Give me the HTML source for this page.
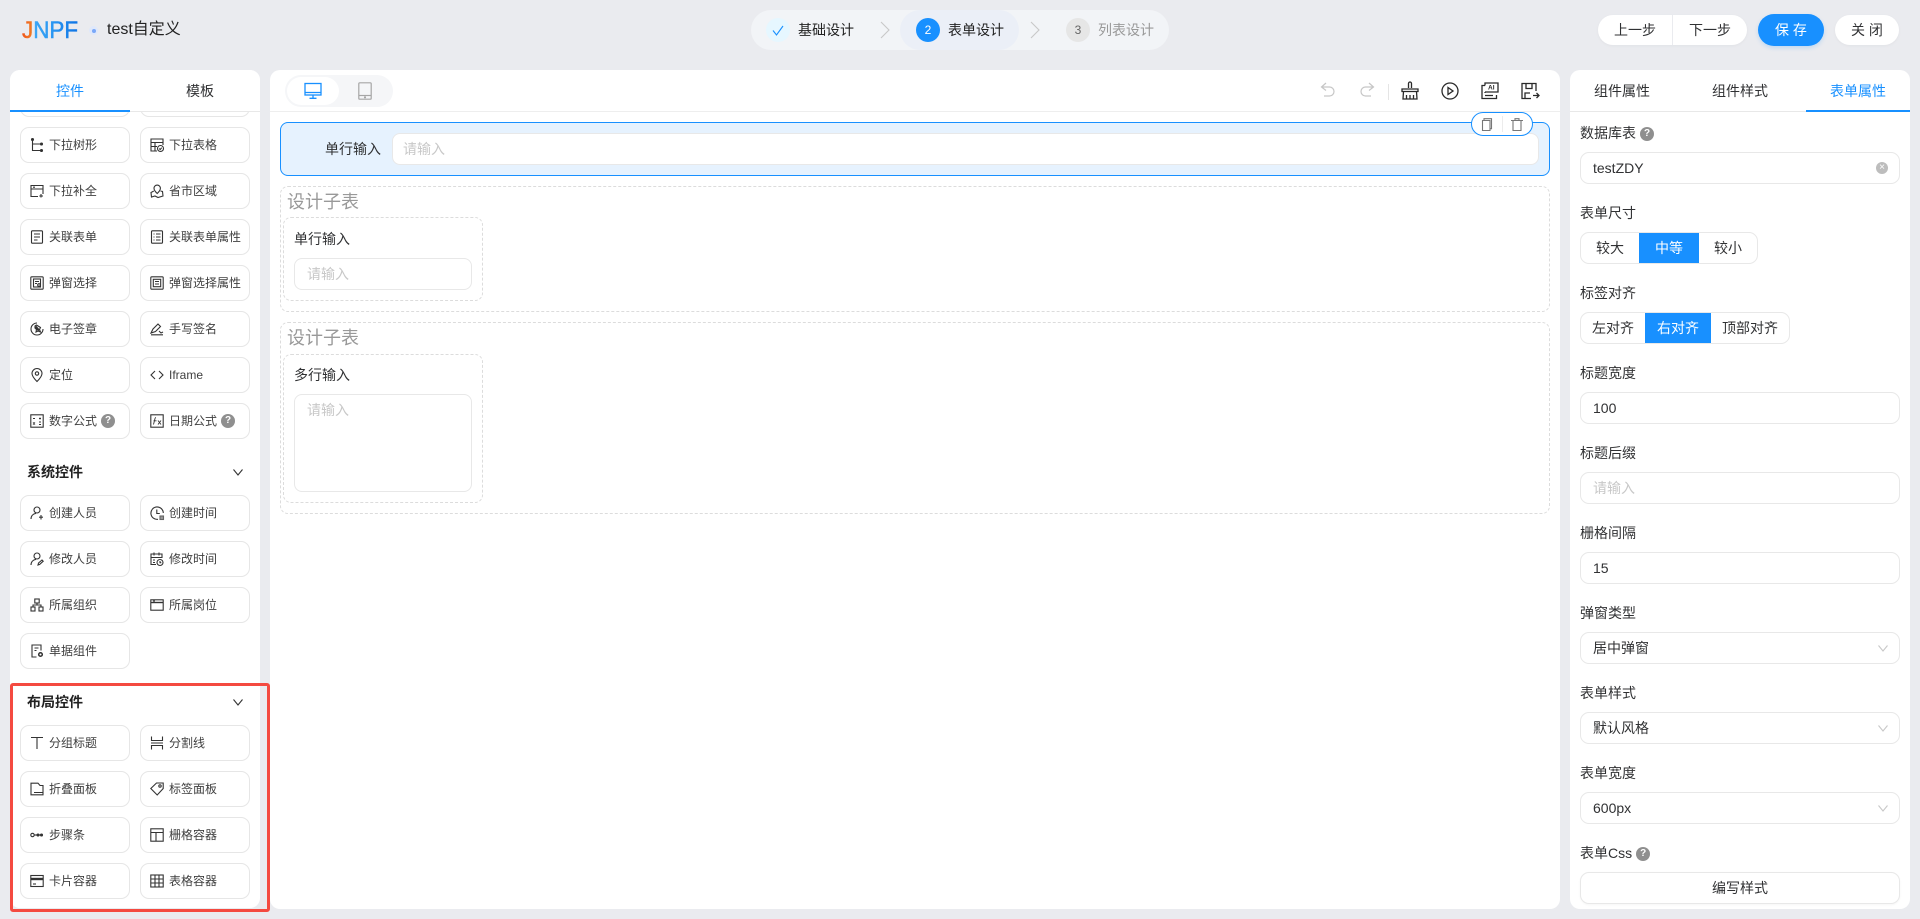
<!DOCTYPE html>
<html lang="zh-CN"><head><meta charset="utf-8"><title>test自定义</title>
<style>
*{box-sizing:border-box}
html,body{margin:0;padding:0}
body{width:1920px;height:919px;overflow:hidden;position:relative;background:#eaebef;font:14px/20px "Liberation Sans","Noto Sans CJK SC",sans-serif;color:#303133}
.a{position:absolute}
.t{position:absolute;white-space:nowrap;line-height:20px}
.panel{position:absolute;background:#fff;border-radius:10px}
svg{display:block;fill:none;stroke:#333;stroke-width:1.1;overflow:visible}
.it{position:absolute;width:110px;height:36px;border:1px solid #e6e6e6;border-radius:9px;background:#fff;display:flex;align-items:center;padding-left:9px;font-size:12px;color:#3f3f3f;white-space:nowrap}
.it svg{width:14px;height:14px;margin-right:5px;flex:none}
.q{display:inline-block;width:14px;height:14px;border-radius:50%;background:#8f8f8f;color:#fff;font-size:10px;line-height:14px;text-align:center;font-weight:bold;margin-left:4px;flex:none;vertical-align:-1px}
.lb .q{position:relative;top:-3px}
.h{position:absolute;left:27px;font-size:14px;font-weight:bold;color:#222;line-height:20px}
.inp{position:absolute;left:1580px;width:320px;height:32px;border:1px solid #e8e8e8;border-radius:9px;background:#fff;padding-left:12px;line-height:30px;color:#303133}
.ph{color:#c8c8c8}
.lb{position:absolute;left:1580px;line-height:20px;color:#303133;white-space:nowrap}
.rb{position:absolute;top:0;height:100%;text-align:center;line-height:30px}
.on{background:#1890ff;color:#fff;line-height:32px;top:-1px;height:32px}
.dash{position:absolute;border:1px dashed #dcdcdc;border-radius:8px}
.tb{position:absolute;top:81px;width:20px;height:20px}
</style></head><body>

<!-- header -->
<svg class="a" style="left:21px;top:15px;width:60px;height:30px;stroke:none" viewBox="0 0 60 30"><defs><linearGradient id="lg" gradientUnits="userSpaceOnUse" x1="0" y1="0" x2="58" y2="0"><stop offset="0" stop-color="#f0501a"/><stop offset=".18" stop-color="#f07a24"/><stop offset=".22" stop-color="#3aa6f5"/><stop offset=".55" stop-color="#2a96f2"/><stop offset="1" stop-color="#0c72e4"/></linearGradient></defs><text x="1" y="23" font-size="24" font-family="Liberation Sans" textLength="56" lengthAdjust="spacingAndGlyphs" fill="url(#lg)" stroke="url(#lg)" stroke-width=".5">JNPF</text></svg>
<div class="a" style="left:89px;top:26px;width:9px;height:9px;border-radius:50%;background:#dfe8fb"></div>
<div class="a" style="left:91.5px;top:28.5px;width:4px;height:4px;border-radius:50%;background:#7aa8f8"></div>
<div class="t" style="left:107px;top:20px;font-size:16px;color:#222">test自定义</div>

<div class="a" style="left:751px;top:10px;width:418px;height:40px;border-radius:20px;background:#f2f4f7"></div>
<div class="a" style="left:900px;top:10px;width:119px;height:40px;border-radius:20px;background:#ebeff7"></div>
<div class="a" style="left:766px;top:18px;width:24px;height:24px;border-radius:50%;background:#e6f7ff"></div>
<svg class="a" style="left:772px;top:25px;width:12px;height:11px;stroke:#1890ff" viewBox="0 0 12 11"><path d="M1 5.500 4.500 10 11 1"/></svg>
<div class="t" style="left:798px;top:20px;color:#222">基础设计</div>
<svg class="a" style="left:880px;top:22px;width:10px;height:16px;stroke:#c8c8c8" viewBox="0 0 10 16"><path d="M1 0 9 8 1 16"/></svg>
<div class="a" style="left:916px;top:18px;width:24px;height:24px;border-radius:50%;background:#1890ff;color:#fff;font-size:12px;line-height:25px;text-align:center">2</div>
<div class="t" style="left:948px;top:20px;color:#222">表单设计</div>
<svg class="a" style="left:1030px;top:22px;width:10px;height:16px;stroke:#c8c8c8" viewBox="0 0 10 16"><path d="M1 0 9 8 1 16"/></svg>
<div class="a" style="left:1066px;top:18px;width:24px;height:24px;border-radius:50%;background:#e6e6e6;color:#666;font-size:12px;line-height:25px;text-align:center">3</div>
<div class="t" style="left:1098px;top:20px;color:#999">列表设计</div>

<div class="a" style="left:1598px;top:15px;width:149px;height:30px;border-radius:15px;background:#fff;box-shadow:0 1px 3px rgba(0,0,0,.04)"></div>
<div class="a" style="left:1672px;top:15px;width:1px;height:30px;background:#eaebef"></div>
<div class="t" style="left:1614px;top:20px">上一步</div>
<div class="t" style="left:1689px;top:20px">下一步</div>
<div class="a" style="left:1758px;top:14px;width:66px;height:32px;border-radius:16px;background:#1890ff;color:#fff;text-align:center;line-height:32px;box-shadow:0 2px 4px rgba(24,144,255,.2)">保 存</div>
<div class="a" style="left:1835px;top:15px;width:64px;height:30px;border-radius:15px;background:#fff;text-align:center;line-height:30px;box-shadow:0 1px 3px rgba(0,0,0,.04)">关 闭</div>

<!-- left panel -->
<div class="panel" style="left:10px;top:70px;width:250px;height:838px"></div>
<div class="it" style="left:20px;top:81px"></div>
<div class="it" style="left:140px;top:81px"></div>
<div class="a" style="left:10px;top:70px;width:250px;height:42px;background:#fff;border-radius:10px 10px 0 0;border-bottom:1px solid #e8e8e8"></div>
<div class="a" style="left:10px;top:110px;width:120px;height:2px;background:#1890ff"></div>
<div class="t" style="left:56px;top:81px;color:#1890ff">控件</div>
<div class="t" style="left:186px;top:81px;color:#303133">模板</div>

<div class="it" style="left:20px;top:127px"><svg viewBox="0 0 14 14"><path d="M2.500 1v11.500H11M2.500 6H11"/><circle cx="2.500" cy="1.500" r="1" fill="#333"/><circle cx="11.500" cy="6" r="1" fill="#333"/><circle cx="11.500" cy="12.500" r="1" fill="#333"/></svg>下拉树形</div>
<div class="it" style="left:140px;top:127px"><svg viewBox="0 0 14 14"><path d="M7 13H1V1h12v6M1 4.500h12M1 8.500h6M5 4.500V13"/><circle cx="10.500" cy="10.500" r="3"/><path d="m9.200 10.500 1 1 1.500-1.800"/></svg>下拉表格</div>
<div class="it" style="left:20px;top:173px"><svg viewBox="0 0 14 14"><path d="M1 8V1.500h12V8M1 5h12M1 8v4.500h7M13 8v2M3 3.200h2M11 10v3.500M9.300 12H13"/></svg>下拉补全</div>
<div class="it" style="left:140px;top:173px"><svg viewBox="0 0 14 14"><path d="M3.800 7 1 8.500 1.500 13l3.500-1 3 1.500 5-1.500-.5-4.500L10.500 7"/><path d="M7.200 9.500C5 7.500 4 6 4 4.300a3.200 3.200 0 0 1 6.400 0c0 1.700-1 3.200-3.200 5.200Z"/></svg>省市区域</div>
<div class="it" style="left:20px;top:219px"><svg viewBox="0 0 14 14"><rect x="1.500" y=".8" width="11" height="12.400" rx="1"/><path d="M4 4h6M4 7h6M4 10h3.500"/></svg>关联表单</div>
<div class="it" style="left:140px;top:219px"><svg viewBox="0 0 14 14"><rect x="1.500" y=".8" width="11" height="12.400" rx="1"/><path d="M6 4h4.500M6 7h4.500M6 10h4.500M3.500 4h1M3.500 7h1M3.500 10h1"/></svg>关联表单属性</div>
<div class="it" style="left:20px;top:265px"><svg viewBox="0 0 14 14"><rect x=".8" y=".8" width="12.400" height="12.400" rx="1"/><rect x="3.500" y="3" width="7" height="8"/><path d="M5 5.500h4M5 7.500h2"/><circle cx="9" cy="9" r="1.300"/></svg>弹窗选择</div>
<div class="it" style="left:140px;top:265px"><svg viewBox="0 0 14 14"><rect x=".8" y=".8" width="12.400" height="12.400" rx="1"/><rect x="3.300" y="3.300" width="7.400" height="7.400"/><path d="M5 5.500h4M5 8h4"/></svg>弹窗选择属性</div>
<div class="it" style="left:20px;top:311px"><svg viewBox="0 0 14 14"><path d="M13 7A6 6 0 1 1 7 1M5 4 6.500 3l4 2.500-1 2 1 2.500-2.500-1-2 1 .5-2.500L5 6Z"/><path d="M5.500 4.500 9 8.500" stroke-width="2.200"/></svg>电子签章</div>
<div class="it" style="left:140px;top:311px"><svg viewBox="0 0 14 14"><path d="M1 11 3 7l5-5 2.500 2.500-5 5ZM1 12.800h12M9 9l2 2 2-1"/></svg>手写签名</div>
<div class="it" style="left:20px;top:357px"><svg viewBox="0 0 14 14"><path d="M7 13.500C3.500 10 2 7.800 2 5.500a5 5 0 0 1 10 0c0 2.300-1.500 4.500-5 8Z"/><circle cx="7" cy="5.500" r="1.700"/></svg>定位</div>
<div class="it" style="left:140px;top:357px"><svg viewBox="0 0 14 14"><path d="M5 3 1 7l4 4M9 3l4 4-4 4"/></svg>Iframe</div>
<div class="it" style="left:20px;top:403px"><svg viewBox="0 0 14 14"><rect x=".8" y=".8" width="12.400" height="12.400"/><path d="M3 4.500h2M9 4.500h2M10 3.500v2M3 9h2M9 8h2M9 10.500h2M3 10.500l2-2M3 8.500l2 2" stroke-width=".9"/></svg>数字公式<span class="q">?</span></div>
<div class="it" style="left:140px;top:403px"><svg viewBox="0 0 14 14"><rect x=".8" y=".8" width="12.400" height="12.400"/><path d="M3.500 10.500 5 4.500q.2-.9 1-.9M3.500 6.800h3M8 6.500l3 4M11 6.500l-3 4" stroke-width=".9"/></svg>日期公式<span class="q">?</span></div>

<div class="h" style="top:462px">系统控件</div>
<svg class="a" style="left:233px;top:469px;width:10px;height:7px" viewBox="0 0 10 7"><path d="M.5.500 5 6 9.500.500"/></svg>

<div class="it" style="left:20px;top:495px"><svg viewBox="0 0 14 14"><circle cx="7" cy="4" r="3"/><path d="M1 13c0-3 2-5.200 5-5.700M11 9v4.500M9 11.200h4"/></svg>创建人员</div>
<div class="it" style="left:140px;top:495px"><svg viewBox="0 0 14 14"><path d="M8 13.300A6.200 6.200 0 1 1 13.300 7"/><path d="M6.800 3.500v4h3"/><rect x="10" y="10" width="3.500" height="3.500" fill="#999" stroke="#666"/></svg>创建时间</div>
<div class="it" style="left:20px;top:541px"><svg viewBox="0 0 14 14"><circle cx="7" cy="4" r="3"/><path d="M1 13c0-3 2-5.200 5-5.700M8 13l.5-2 3.500-3 1.200 1.200-3.500 3.200Z"/></svg>修改人员</div>
<div class="it" style="left:140px;top:541px"><svg viewBox="0 0 14 14"><path d="M6 12.500H1V2h11v4M1 5.500h11M4 .5v3M9 .5v3M3 8h2M3 10.500h2"/><circle cx="10" cy="10.500" r="3"/><path d="M10 9v1.700h1.300"/></svg>修改时间</div>
<div class="it" style="left:20px;top:587px"><svg viewBox="0 0 14 14"><rect x="4.800" y="1" width="4.400" height="4"/><rect x="1" y="9" width="4" height="4"/><rect x="9" y="9" width="4" height="4"/><path d="M7 5v2M3 9V7h8v2"/></svg>所属组织</div>
<div class="it" style="left:140px;top:587px"><svg viewBox="0 0 14 14"><rect x=".8" y="1.800" width="12.400" height="10.400"/><path d="M.8 4.500h12.400" stroke-width="1.400"/><path d="M3 3h2"/></svg>所属岗位</div>
<div class="it" style="left:20px;top:633px"><svg viewBox="0 0 14 14"><path d="M6.500 13H2V1h9v5.500M4.500 4h4M4.500 6.500h2"/><circle cx="10.500" cy="10.500" r="1.800" stroke-width="1.500"/></svg>单据组件</div>

<div class="h" style="top:692px">布局控件</div>
<svg class="a" style="left:233px;top:699px;width:10px;height:7px" viewBox="0 0 10 7"><path d="M.5.500 5 6 9.500.500"/></svg>

<div class="it" style="left:20px;top:725px"><svg viewBox="0 0 14 14"><path d="M1 1.500h12M7 1.500V13"/></svg>分组标题</div>
<div class="it" style="left:140px;top:725px"><svg viewBox="0 0 14 14"><path d="M1.500 .5v4h11v-4M1 7h12M1.500 13.500v-4h11v4"/></svg>分割线</div>
<div class="it" style="left:20px;top:771px"><svg viewBox="0 0 14 14"><path d="M1 12.800V1.200h7L10 3.500h3v9.300ZM4 10.500h9"/></svg>折叠面板</div>
<div class="it" style="left:140px;top:771px"><svg viewBox="0 0 14 14"><path d="M.8 6.500 6.500 1h6.700v5.500l-6 6.500Z"/><circle cx="10" cy="4" r="1.200"/></svg>标签面板</div>
<div class="it" style="left:20px;top:817px"><svg viewBox="0 0 14 14"><circle cx="2.500" cy="7" r="1.700"/><path d="M4.200 7H13"/><circle cx="8" cy="7" r="1" fill="#333"/><circle cx="11.500" cy="7" r="1" fill="#333"/></svg>步骤条</div>
<div class="it" style="left:140px;top:817px"><svg viewBox="0 0 14 14"><rect x=".8" y=".8" width="12.400" height="12.400"/><path d="M.8 4.500h12.400M6 4.500v8.700"/></svg>栅格容器</div>
<div class="it" style="left:20px;top:863px"><svg viewBox="0 0 14 14"><rect x=".8" y="1.500" width="12.400" height="11"/><path d="M.8 5h12.400" stroke-width="2.400"/><path d="M3 10h3"/></svg>卡片容器</div>
<div class="it" style="left:140px;top:863px"><svg viewBox="0 0 14 14"><rect x=".8" y="1" width="12.400" height="12"/><path d="M.8 5h12.400M.8 9h12.400M5 1v12M9 1v12"/></svg>表格容器</div>

<div class="a" style="left:10px;top:683px;width:260px;height:229px;border:3px solid #f44a40;border-radius:3px"></div>

<!-- center panel -->
<div class="panel" style="left:270px;top:70px;width:1290px;height:839px"></div>
<div class="a" style="left:270px;top:111px;width:1290px;height:1px;background:#eeeeee"></div>
<div class="a" style="left:285px;top:75px;width:108px;height:32px;border-radius:16px;background:#f5f6f8"></div>
<div class="a" style="left:287px;top:77px;width:52px;height:28px;border-radius:14px;background:#fff"></div>
<svg class="a" style="left:304px;top:82px;width:18px;height:18px;stroke:#1890ff;stroke-width:1.300" viewBox="0 0 18 18"><rect x="1" y="1.500" width="16" height="11.500"/><path d="M1 10.500h16M9 13v3M5.500 16.300h7"/></svg>
<svg class="a" style="left:358px;top:82px;width:14px;height:18px;stroke:#a6a6a6;stroke-width:1.200" viewBox="0 0 14 18"><rect x=".8" y=".8" width="12.400" height="16.400" rx="1"/><path d="M.8 13.500h12.400"/><circle cx="7" cy="15.300" r=".5" fill="#a6a6a6"/></svg>

<svg class="tb" style="left:1318px;stroke:#c6c6c6;stroke-width:1.200" viewBox="0 0 20 20"><path d="M8 2 3.500 6 8 9.500M4 6h7.500a4.500 4.500 0 0 1 0 9H6"/></svg>
<svg class="tb" style="left:1357px;stroke:#c6c6c6;stroke-width:1.200" viewBox="0 0 20 20"><path d="m12 2 4.500 4L12 9.500M16 6H8.500a4.500 4.500 0 0 0 0 9H14"/></svg>
<div class="a" style="left:1388px;top:84px;width:1px;height:16px;background:#e5e5e5"></div>
<svg class="tb" style="left:1400px;stroke:#2a2a2a;stroke-width:1.300" viewBox="0 0 20 20"><path d="M8.500 7V2.500a1.500 1.500 0 0 1 3 0V7M2 8h16v2.500H2ZM3.500 10.500 3 18h14l-.5-7.500M6.500 14v4M10 14v4M13.500 14v4"/></svg>
<svg class="tb" style="left:1440px;stroke:#2a2a2a;stroke-width:1.300" viewBox="0 0 20 20"><circle cx="10" cy="10" r="8"/><path d="M8 6.500v7l5-3.500Z"/></svg>
<svg class="tb" style="left:1480px;stroke:#2a2a2a;stroke-width:1.300" viewBox="0 0 20 20"><path d="M5 4.500H2v13h14.500V14M5 4.500V2h13v9H5M5 11v1M5 14.500h8"/><text x="8" y="8.500" font-size="6.500" fill="#2a2a2a" stroke="none" font-family="Liberation Sans" font-weight="bold">AI</text></svg>
<svg class="tb" style="left:1520px;stroke:#2a2a2a;stroke-width:1.300" viewBox="0 0 20 20"><path d="M11 17.500H2v-15h14V10M6 2.500v5h6v-5M5 17v-5h5M13 14.500h6M16.500 12l2.500 2.500-2.500 2.500"/></svg>

<div class="a" style="left:280px;top:122px;width:1270px;height:54px;background:#e6f2fe;border:1px solid #1890ff;border-radius:8px"></div>
<div class="t" style="left:325px;top:139px;color:#303133">单行输入</div>
<div class="a" style="left:391.5px;top:133px;width:1147.5px;height:32px;background:#fff;border:1px solid #e8e8e8;border-radius:8px"></div>
<div class="t ph" style="left:403px;top:139px">请输入</div>
<div class="a" style="left:1471px;top:112px;width:62px;height:24px;background:#fff;border:1px solid #1890ff;border-radius:12px"></div>
<div class="a" style="left:1502px;top:116px;width:1px;height:16px;background:#ececec"></div>
<svg class="a" style="left:1481px;top:118px;width:12px;height:13px;stroke:#777" viewBox="0 0 12 13"><path d="M3 2.500V.7h7.500v10H9M1.500 2.500H9v10H1.500Z"/></svg>
<svg class="a" style="left:1511px;top:118px;width:12px;height:13px;stroke:#777" viewBox="0 0 12 13"><path d="M0 2.500h12M4 2.500V.7h4v1.800M2 2.500v10h8v-10"/></svg>

<div class="dash" style="left:280px;top:186px;width:1270px;height:126px"></div>
<div class="t" style="left:287px;top:192px;font-size:18px;color:#999">设计子表</div>
<div class="dash" style="left:283px;top:217px;width:200px;height:84px"></div>
<div class="t" style="left:294px;top:229px;color:#303133">单行输入</div>
<div class="a" style="left:294px;top:258px;width:178px;height:32px;border:1px solid #e8e8e8;border-radius:8px"></div>
<div class="t ph" style="left:307px;top:264px">请输入</div>

<div class="dash" style="left:280px;top:322px;width:1270px;height:192px"></div>
<div class="t" style="left:287px;top:328px;font-size:18px;color:#999">设计子表</div>
<div class="dash" style="left:283px;top:354px;width:200px;height:149px"></div>
<div class="t" style="left:294px;top:365px;color:#303133">多行输入</div>
<div class="a" style="left:294px;top:394px;width:178px;height:98px;border:1px solid #e8e8e8;border-radius:8px"></div>
<div class="t ph" style="left:307px;top:400px">请输入</div>

<!-- right panel -->
<div class="panel" style="left:1570px;top:70px;width:340px;height:839px"></div>
<div class="a" style="left:1570px;top:111px;width:340px;height:1px;background:#e8e8e8"></div>
<div class="a" style="left:1806px;top:110px;width:104px;height:2px;background:#1890ff"></div>
<div class="t" style="left:1594px;top:81px">组件属性</div>
<div class="t" style="left:1712px;top:81px">组件样式</div>
<div class="t" style="left:1830px;top:81px;color:#1890ff">表单属性</div>

<div class="lb" style="top:123px">数据库表<span class="q">?</span></div>
<div class="inp" style="top:152px">testZDY</div>
<div class="a" style="left:1876px;top:162px;width:12px;height:12px;border-radius:50%;background:#bdbdbd;color:#fff;font-size:10px;line-height:11px;text-align:center">×</div>

<div class="lb" style="top:203px">表单尺寸</div>
<div class="a" style="left:1580px;top:232px;width:178px;height:32px;border:1px solid #e8e8e8;border-radius:9px;background:#fff;overflow:hidden">
<div class="rb" style="left:0;width:58px">较大</div><div class="rb on" style="left:58px;width:60px">中等</div><div class="rb" style="left:118px;width:58px">较小</div></div>

<div class="lb" style="top:283px">标签对齐</div>
<div class="a" style="left:1580px;top:312px;width:210px;height:32px;border:1px solid #e8e8e8;border-radius:9px;background:#fff;overflow:hidden">
<div class="rb" style="left:0;width:64px">左对齐</div><div class="rb on" style="left:64px;width:66px">右对齐</div><div class="rb" style="left:130px;width:78px">顶部对齐</div></div>

<div class="lb" style="top:363px">标题宽度</div>
<div class="inp" style="top:392px">100</div>
<div class="lb" style="top:443px">标题后缀</div>
<div class="inp ph" style="top:472px;color:#c8c8c8">请输入</div>
<div class="lb" style="top:523px">栅格间隔</div>
<div class="inp" style="top:552px">15</div>
<div class="lb" style="top:603px">弹窗类型</div>
<div class="inp" style="top:632px">居中弹窗</div>
<svg class="a" style="left:1878px;top:645px;width:10px;height:7px;stroke:#c8c8c8" viewBox="0 0 10 7"><path d="M.5.500 5 6 9.500.500"/></svg>
<div class="lb" style="top:683px">表单样式</div>
<div class="inp" style="top:712px">默认风格</div>
<svg class="a" style="left:1878px;top:725px;width:10px;height:7px;stroke:#c8c8c8" viewBox="0 0 10 7"><path d="M.5.500 5 6 9.500.500"/></svg>
<div class="lb" style="top:763px">表单宽度</div>
<div class="inp" style="top:792px">600px</div>
<svg class="a" style="left:1878px;top:805px;width:10px;height:7px;stroke:#c8c8c8" viewBox="0 0 10 7"><path d="M.5.500 5 6 9.500.500"/></svg>
<div class="lb" style="top:843px">表单Css<span class="q">?</span></div>
<div class="inp" style="top:872px;padding:0;text-align:center;box-shadow:0 1px 2px rgba(0,0,0,.04)">编写样式</div>
</body></html>
